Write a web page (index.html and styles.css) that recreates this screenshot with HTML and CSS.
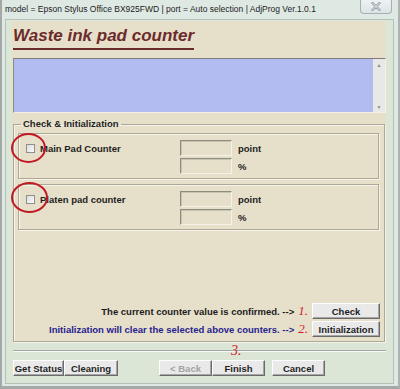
FILE: index.html
```html
<!DOCTYPE html>
<html>
<head>
<meta charset="utf-8">
<link rel="stylesheet" href="styles.css">
</head>
<body>
<div class="window">
  <div class="titlebar">
    <span class="title">model = Epson Stylus Office BX925FWD | port = Auto selection | AdjProg Ver.1.0.1</span>
    <div class="close">
      <svg width="10" height="9" viewBox="0 0 10 9"><path d="M1.5 1 L8.5 8 M8.5 1 L1.5 8" stroke="#8d969b" stroke-width="2.4" stroke-linecap="round"/><path d="M1.5 1 L8.5 8 M8.5 1 L1.5 8" stroke="#f4f6f7" stroke-width="1" stroke-linecap="round"/></svg>
    </div>
  </div>
  <div class="client">
    <div class="page">
      <h1 class="heading">Waste ink pad counter</h1>
      <div class="log">
        <div class="log-area"></div>
        <div class="scrollbar"><span class="arrow">&#9650;</span><span class="arrow">&#9660;</span></div>
      </div>
      <fieldset class="group">
        <legend class="legend">Check &amp; Initialization</legend>
        <div class="counter">
          <div class="mark mark-1"></div>
          <div class="check-label"><span class="checkbox"></span><span>Main Pad Counter</span></div>
          <div class="field"></div><span class="unit">point</span>
          <span></span><div class="field"></div><span class="unit">%</span>
        </div>
        <div class="counter">
          <div class="mark mark-2"></div>
          <div class="check-label"><span class="checkbox"></span><span>Platen pad counter</span></div>
          <div class="field"></div><span class="unit">point</span>
          <span></span><div class="field"></div><span class="unit">%</span>
        </div>
        <div class="actions">
          <div class="action-row">
            <span class="note">The current counter value is confirmed. --&gt;</span>
            <span class="step">1.</span>
            <button class="btn btn-action">Check</button>
          </div>
          <div class="action-row">
            <span class="note note-blue">Initialization will clear the selected above counters. --&gt;</span>
            <span class="step">2.</span>
            <button class="btn btn-action">Initialization</button>
          </div>
        </div>
      </fieldset>
    </div>
    <div class="footer">
      <span class="step step-3">3.</span>
      <div class="separator"></div>
      <div class="buttons">
        <button class="btn btn-status">Get Status</button>
        <button class="btn btn-clean">Cleaning</button>
        <button class="btn btn-back" disabled>&lt; Back</button>
        <button class="btn btn-finish">Finish</button>
        <button class="btn btn-cancel">Cancel</button>
      </div>
    </div>
  </div>
</div>
</body>
</html>
```

FILE: styles.css
```css
* { box-sizing: border-box; }
html, body { margin: 0; padding: 0; }
body {
  width: 400px;
  height: 389px;
  overflow: hidden;
  background: #a9adac;
  font-family: "Liberation Sans", Arial, sans-serif;
}
.window {
  width: 400px;
  height: 389px;
  display: flex;
  flex-direction: column;
  background: #dfe9e4;
  border-left: 2px solid #a4a9a8;
  border-right: 2px solid #aeb3b2;
  border-bottom: 3px solid #a4a9a8;
  padding: 0 4px 2px 3px;
}
.titlebar {
  height: 19px;
  display: flex;
  justify-content: space-between;
  align-items: flex-start;
}
.title {
  font-family: "Liberation Sans", Arial, sans-serif;
  font-size: 8.5px;
  line-height: 11px;
  color: #222;
  margin-top: 4px;
  white-space: nowrap;
}
.close {
  width: 32px;
  height: 14px;
  margin-right: 2px;
  border: 1px solid #a6b0b4;
  border-top: none;
  border-radius: 0 0 4px 4px;
  background: linear-gradient(#eef2f3, #dce4e6);
  display: flex;
  align-items: center;
  justify-content: center;
}
.client {
  flex: 1;
  display: flex;
  flex-direction: column;
  border: 1px solid #b4c1b8;
  background: #dce6d6;
  padding: 1px 7px 0 6px;
}
.page {
  background: #e6dfca;
  padding: 0 0 1px 1px;
  display: flex;
  flex-direction: column;
}
.heading {
  margin: 5px 0 0 0;
  align-self: flex-start;
  font-size: 17px;
  line-height: 20px;
  font-weight: bold;
  font-style: italic;
  color: #6c2b2b;
  padding-bottom: 2px;
  border-bottom: 2px solid #6c2b2b;
}
.log {
  margin-top: 8px;
  height: 55px;
  display: flex;
  border-top: 1px solid #7c7c7c;
  border-left: 1px solid #8a8a8a;
  border-bottom: 1px solid #f2f0e8;
  border-right: 1px solid #f2f0e8;
}
.log-area {
  flex: 1;
  background: #b2bcf0;
}
.scrollbar {
  width: 12px;
  background: #e8e8e6;
  display: flex;
  flex-direction: column;
  justify-content: space-between;
  align-items: center;
  padding: 3px 0 2px;
}
.arrow {
  font-size: 5px;
  line-height: 6px;
  color: #8a8a8a;
}
.group {
  margin: 5px 1px 0 0;
  padding: 0 4px 4px 4px;
  border: 1px solid #aca897;
  box-shadow: inset 1px 1px 0 #f6f3ea, 1px 1px 0 #f6f3ea;
  min-width: 0;
}
.legend {
  margin-left: 3px;
  padding: 0 2px;
  font-size: 9.5px;
  line-height: 12px;
  font-weight: bold;
  color: #1e1e1e;
}
.counter {
  position: relative;
  margin: 3px 1px 0 0;
  height: 46px;
  border: 1px solid #aca897;
  box-shadow: inset 1px 1px 0 #f6f3ea, 1px 1px 0 #f6f3ea;
  padding: 6px 0 4px 7px;
  display: grid;
  grid-template-columns: 154px 52px auto;
  grid-auto-rows: 16px;
  row-gap: 2px;
  align-items: center;
}
.counter + .counter { margin-top: 5px; }
.check-label {
  display: flex;
  align-items: center;
  gap: 5px;
  font-size: 9.5px;
  font-weight: bold;
  color: #1e1e1e;
}
.checkbox {
  width: 9px;
  height: 9px;
  border: 1px solid #8f8f8f;
  background: linear-gradient(135deg, #dcdcdc, #fbfbfb);
}
.field {
  height: 16px;
  border-top: 1px solid #8e8b7f;
  border-left: 1px solid #8e8b7f;
  border-bottom: 1px solid #f4f1e6;
  border-right: 1px solid #f4f1e6;
  box-shadow: inset 1px 1px 0 #c8c4b3;
  background: #e6dfca;
}
.unit {
  margin-left: 6px;
  font-size: 9.5px;
  font-weight: bold;
  color: #1e1e1e;
}
.mark {
  position: absolute;
  border: 2px solid #c21a22;
  border-radius: 50%;
}
.mark-1 { left: -8px; top: -1px; width: 35px; height: 30px; }
.mark-2 { left: -8px; top: -3px; width: 37px; height: 31px; }
.actions {
  margin-top: 73px;
  display: flex;
  flex-direction: column;
  gap: 2px;
}
.action-row {
  display: flex;
  justify-content: flex-end;
  align-items: center;
  gap: 4px;
}
.note {
  font-size: 9.5px;
  font-weight: bold;
  color: #1c1c1c;
}
.note-blue { color: #27238f; }
.step {
  font-family: "Liberation Serif", "Times New Roman", serif;
  font-style: italic;
  font-size: 13px;
  line-height: 14px;
  color: #d4222a;
}
.btn {
  height: 16px;
  padding: 0;
  font-family: "Liberation Sans", Arial, sans-serif;
  font-size: 9.5px;
  font-weight: bold;
  color: #1e1e1e;
  background: #e9e9e9;
  border-top: 1px solid #fdfdfd;
  border-left: 1px solid #fdfdfd;
  border-right: 1px solid #6a6a6a;
  border-bottom: 1px solid #6a6a6a;
  box-shadow: inset -1px -1px 0 #a6a6a6;
}
.btn-action { width: 68px; }
.footer {
  position: relative;
  flex: 1;
  padding: 7px 0 0 1px;
}
.step-3 {
  position: absolute;
  left: 219px;
  top: 1px;
  font-size: 14px;
}
.separator {
  height: 2px;
  border-top: 1px solid #9fa79f;
  border-bottom: 1px solid #f7faf6;
}
.buttons {
  margin-top: 8px;
  display: flex;
}
.btn-status { width: 51px; }
.btn-clean { width: 54px; }
.btn-back { width: 53px; margin-left: 41px; color: #a3a3a3; }
.btn-finish { width: 53px; }
.btn-cancel { width: 53px; margin-left: 7px; }
```
